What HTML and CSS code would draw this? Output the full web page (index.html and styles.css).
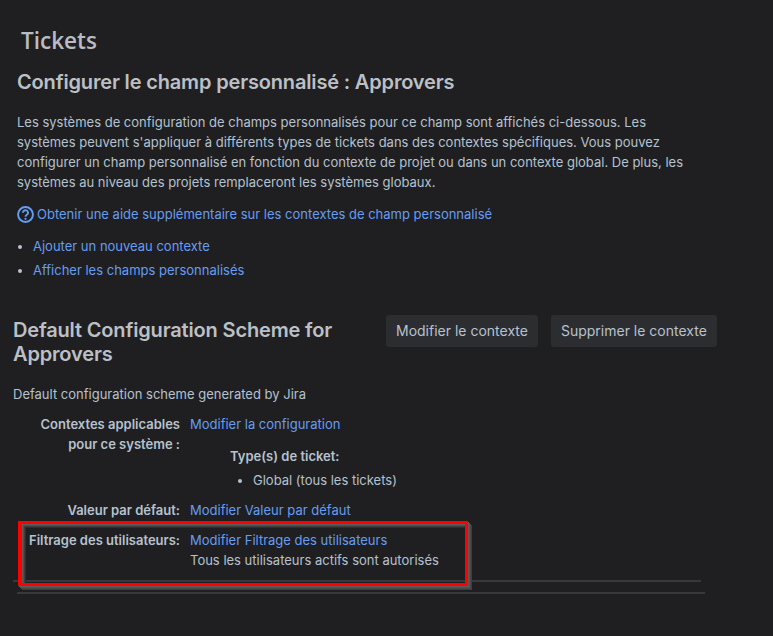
FILE: index.html
```html
<!DOCTYPE html>
<html lang="fr">
<head>
<meta charset="utf-8">
<title>Tickets</title>
<link rel="stylesheet" href="styles.css">
</head>
<body>
<main class="page">
  <h1 class="title">Tickets</h1>
  <section class="intro">
    <h2 class="heading">Configurer le champ personnalisé : Approvers</h2>
    <p class="desc">Les systèmes de configuration de champs personnalisés pour ce champ sont affichés ci-dessous. Les systèmes peuvent s'appliquer à différents types de tickets dans des contextes spécifiques. Vous pouvez configurer un champ personnalisé en fonction du contexte de projet ou dans un contexte global. De plus, les systèmes au niveau des projets remplaceront les systèmes globaux.</p>
    <p class="help">
      <svg class="help-icon" viewBox="0 0 16 16" width="17" height="17" aria-hidden="true">
        <circle cx="8" cy="8" r="7" fill="none" stroke="currentColor" stroke-width="1.8"/>
        <path d="M5.6 6.3a2.4 2.3 0 1 1 3.7 1.9c-.8.55-1.3 1-1.3 1.8" fill="none" stroke="currentColor" stroke-width="1.8"/>
        <circle cx="8" cy="12.1" r="1.05" fill="currentColor"/>
      </svg>
      <a href="#">Obtenir une aide supplémentaire sur les contextes de champ personnalisé</a>
    </p>
    <ul class="links">
      <li><a href="#">Ajouter un nouveau contexte</a></li>
      <li><a href="#">Afficher les champs personnalisés</a></li>
    </ul>
  </section>
  <section class="scheme">
    <div class="scheme-head">
      <h3 class="scheme-title">Default Configuration Scheme for Approvers</h3>
      <div class="actions">
        <button class="btn">Modifier le contexte</button>
        <button class="btn">Supprimer le contexte</button>
      </div>
    </div>
    <p class="scheme-desc">Default configuration scheme generated by Jira</p>
    <dl class="props">
      <dt>Contextes applicables pour ce système :</dt>
      <dd>
        <a href="#">Modifier la configuration</a>
        <div class="types">
          <strong>Type(s) de ticket:</strong>
          <ul class="type-list"><li>Global (tous les tickets)</li></ul>
        </div>
      </dd>
      <dt>Valeur par défaut:</dt>
      <dd><a href="#">Modifier Valeur par défaut</a></dd>
      <dt>Filtrage des utilisateurs:</dt>
      <dd><a href="#">Modifier Filtrage des utilisateurs</a><br>Tous les utilisateurs actifs sont autorisés</dd>
    </dl>
    <hr class="rule">
    <hr class="rule rule-shift">
    <div class="highlight"></div>
  </section>
</main>
</body>
</html>
```
FILE: styles.css
```css
* { box-sizing: border-box; }
html, body { margin: 0; height: 100%; }
body {
  background: #1f1f21;
  color: #b6c2cf;
  font: 13px/20px Inter, "Liberation Sans", sans-serif;
  overflow: hidden;
}
a { color: #669df1; text-decoration: none; }
.page { padding: 25px 0 0 0; }
.title {
  margin: 0 0 0 21px;
  font: 600 22.5px/32px "Open Sans", sans-serif;
  color: #b9bdc2;
}
.intro { padding-left: 17px; width: 700px; }
.heading {
  margin: 13px 0 0;
  font-size: 20px;
  line-height: 24px;
  font-weight: 600;
  letter-spacing: -0.16px;
  color: #bcc0c6;
}
.desc { margin: 18px 0 0; }
.help { margin: 12px 0 0; display: flex; align-items: center; gap: 3px; height: 20px; }
.help-icon { color: #669df1; flex: none; }
.links { margin: 12px 0 0; padding: 0 0 0 16px; }
.links li { margin-bottom: 4px; }
.scheme { position: relative; margin-top: 35px; padding-left: 13px; }
.scheme-head { display: flex; align-items: flex-start; }
.scheme-title {
  margin: 0;
  padding-top: 3px;
  width: 373px;
  font-size: 20px;
  line-height: 24px;
  font-weight: 600;
  letter-spacing: -0.16px;
  color: #bcc0c6;
}
.actions { display: flex; gap: 13px; }
.btn {
  height: 32px;
  padding: 0 10px;
  border: 0;
  border-radius: 3px;
  background: #2c2d30;
  color: #b6c2cf;
  font: 14px/20px Inter, "Liberation Sans", sans-serif;
}
.scheme-desc { margin: 18px 0 0; }
.props {
  display: grid;
  grid-template-columns: 167px 1fr;
  column-gap: 10px;
  row-gap: 10px;
  margin: 10px 0 0;
}
.props dt { padding-left: 15px; text-align: right; font-weight: 600; }
.props dd { margin: 0; }
.types { margin: 2px 0 0 40px; }
.types strong { font-weight: 600; display: block; padding-top: 10px; }
.type-list { margin: 4px 0 0; padding-left: 23px; }
.rule { margin: 0; border: 0; height: 2px; width: 688px; background: #37383b; }
.props + .rule { margin-top: 10px; }
.rule-shift { margin: 10px 0 0 4px; }
.highlight {
  position: absolute;
  left: 18px;
  top: 206px;
  width: 450px;
  height: 65px;
  border: 3px solid #f00;
  border-left-width: 4px;
  box-shadow:
    1px 1px 0 #5c5c5c, 2px 2px 0 #525252, 3px 3px 0 #484848, 4px 4px 0 #3e3e3e,
    inset 1px 1px 0 #5c5c5c, inset 2px 2px 0 #4e4e4e, inset 3px 3px 0 #3e3e3e, inset 4px 4px 0 #2e2e2f;
}
```
